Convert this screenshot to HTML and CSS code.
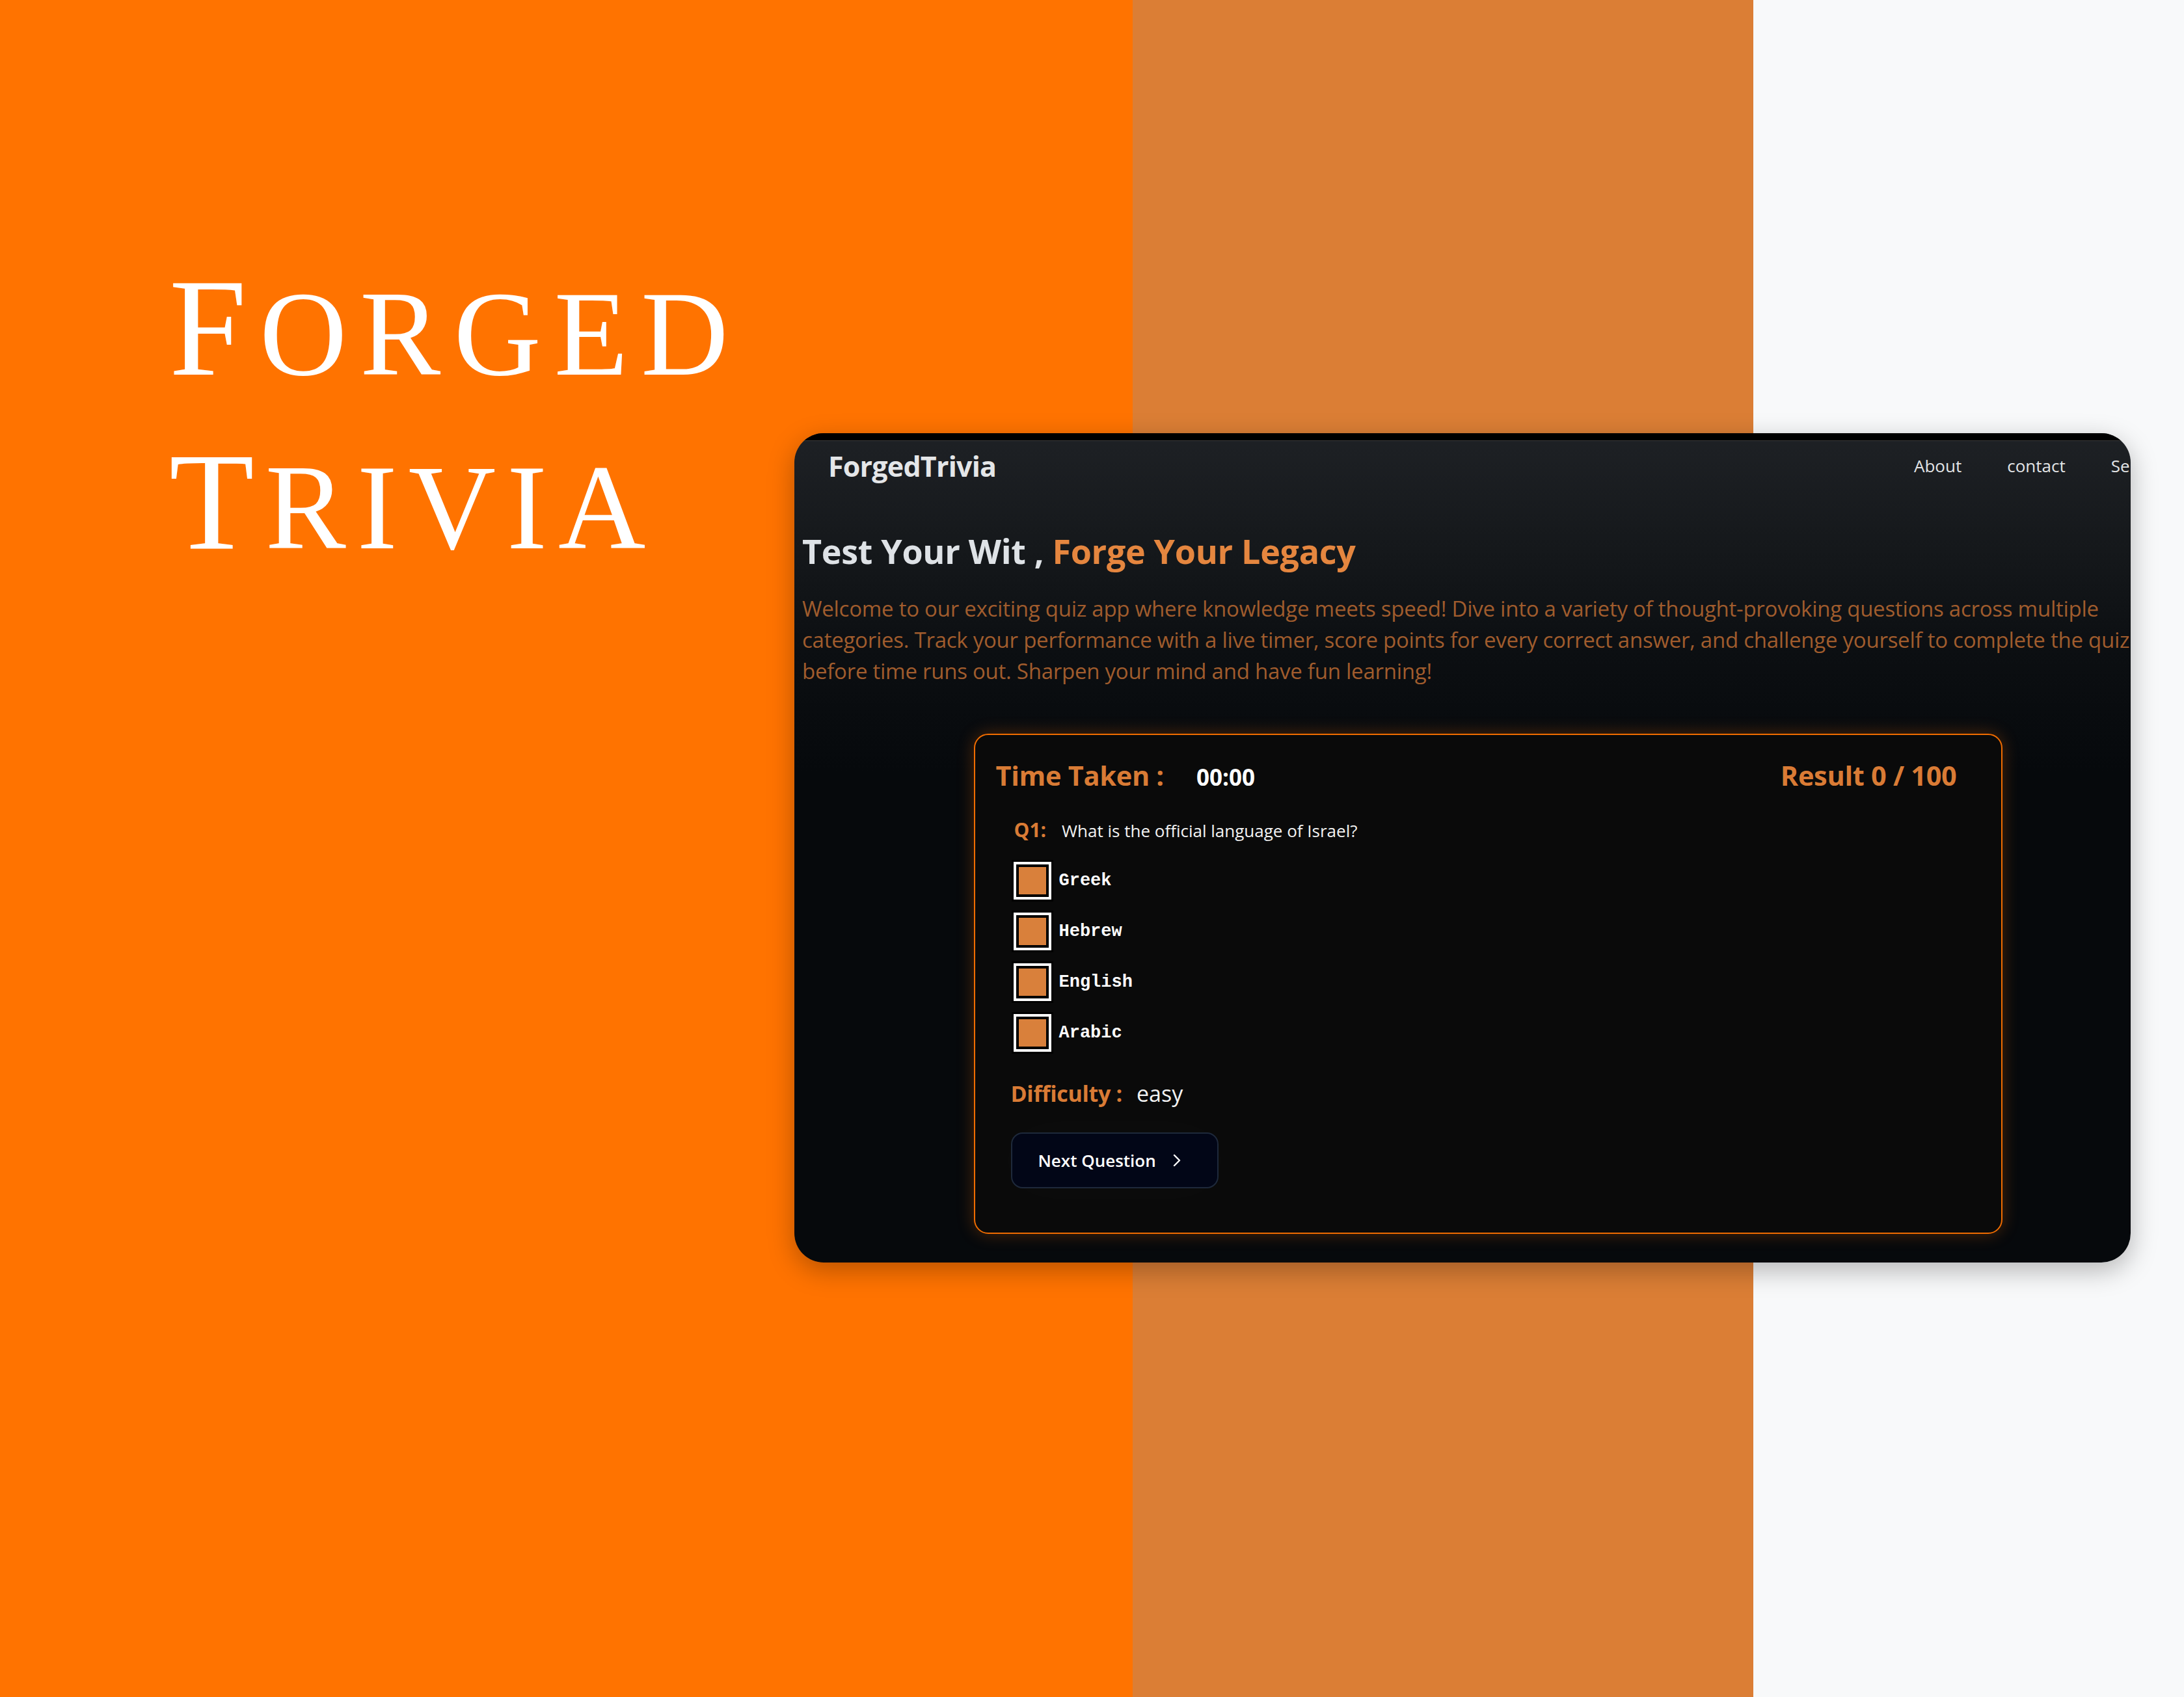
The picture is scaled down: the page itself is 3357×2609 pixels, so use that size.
FILE: index.html
```html
<!DOCTYPE html>
<html lang="en">
<head>
<meta charset="utf-8">
<title>Forged Trivia</title>
<link rel="stylesheet" href="styles.css">
</head>
<body>
<div class="stage">
  <div class="brand">
    <div class="brand-line">Forged</div>
    <div class="brand-line">Trivia</div>
  </div>

  <div class="device">
    <div class="device-bar"></div>
    <div class="page">
      <header class="nav">
        <div class="logo">ForgedTrivia</div>
        <nav class="links">
          <a href="#">About</a>
          <a href="#">contact</a>
          <a href="#">Services</a>
        </nav>
      </header>

      <main class="hero">
        <h1 class="hero-title">Test Your Wit , <span class="accent">Forge Your Legacy</span></h1>
        <p class="hero-text">Welcome to our exciting quiz app where knowledge meets speed! Dive into a variety of thought-provoking questions across multiple categories. Track your performance with a live timer, score points for every correct answer, and challenge yourself to complete the quiz before time runs out. Sharpen your mind and have fun learning!</p>

        <section class="quiz">
          <div class="quiz-head">
            <div class="timer"><span class="label-lg">Time Taken :</span><span class="time">00:00</span></div>
            <div class="label-lg">Result 0 / 100</div>
          </div>

          <div class="question"><span class="q-num">Q1:</span><span class="q-text">What is the official language of Israel?</span></div>

          <ul class="options">
            <li class="option"><span class="cb"><span class="cb-ring"><span class="cb-fill"></span></span></span><span class="opt-label">Greek</span></li>
            <li class="option"><span class="cb"><span class="cb-ring"><span class="cb-fill"></span></span></span><span class="opt-label">Hebrew</span></li>
            <li class="option"><span class="cb"><span class="cb-ring"><span class="cb-fill"></span></span></span><span class="opt-label">English</span></li>
            <li class="option"><span class="cb"><span class="cb-ring"><span class="cb-fill"></span></span></span><span class="opt-label">Arabic</span></li>
          </ul>

          <div class="difficulty"><span class="diff-label">Difficulty :</span><span class="diff-value">easy</span></div>

          <button class="next-btn" type="button">
            <span>Next Question</span>
            <svg class="chev" viewBox="0 0 12 20" width="12" height="20" aria-hidden="true"><path d="M2 2 L10 10 L2 18" fill="none" stroke="#ffffff" stroke-width="2.4" stroke-linecap="round" stroke-linejoin="round"/></svg>
          </button>
        </section>
      </main>
    </div>
  </div>
</div>
</body>
</html>
```

FILE: styles.css
```css
* { box-sizing: border-box; }

html, body {
  margin: 0;
  padding: 0;
}

body {
  width: 3357px;
  height: 2609px;
  overflow: hidden;
  background: linear-gradient(to right, #ff7300 0, #ff7300 1741px, #db7e35 1741px, #db7e35 2695px, #f8f9fa 2695px, #f8f9fa 100%);
  font-family: "Open Sans", "Noto Sans", sans-serif;
}

.stage {
  display: flex;
  align-items: flex-start;
}

/* Big brand title */
.brand {
  flex: none;
  width: 964px;
  margin-left: 260px;
  margin-top: 375px;
  color: #ffffff;
  font-family: "Liberation Serif", "Times New Roman", serif;
}

.brand-line {
  font-size: 186px;
  line-height: 257px;
  text-transform: uppercase;
  letter-spacing: 20px;
  white-space: nowrap;
}

.brand-line + .brand-line {
  letter-spacing: 17px;
}

.brand-line::first-letter {
  font-size: 214px;
}

/* Device / screenshot card */
.device {
  flex: none;
  width: 2054px;
  height: 1275px;
  margin-top: 666px;
  margin-left: -3px;
  border-radius: 45px;
  overflow: hidden;
  background: linear-gradient(180deg, #1e2125 0px, #15181b 180px, #0c0f12 330px, #06090c 520px, #06090c 100%);
  box-shadow: 0 12px 40px rgba(0, 0, 0, 0.28);
}

.device-bar {
  height: 12px;
  background: #000;
  border-bottom: 1px solid #3a3a3a;
}

.page {
  width: 2132px;
}

.nav {
  height: 76px;
  padding: 0 0 0 52px;
  display: flex;
  align-items: center;
  justify-content: space-between;
}

.logo {
  color: #e4e6e8;
  font-weight: 700;
  font-size: 43px;
  letter-spacing: -0.8px;
}

.links {
  display: flex;
  gap: 70px;
  width: 411px;
}

.links a {
  color: #e2e4e6;
  text-decoration: none;
  font-size: 26px;
}

.hero {
  padding: 0 12px;
}

.hero-title {
  margin: 63px 0 0;
  font-size: 52px;
  line-height: 60px;
  font-weight: 700;
  color: #dee2e6;
  letter-spacing: -0.3px;
}

.accent {
  color: #e5863f;
}

.hero-text {
  margin: 35px 0 0;
  font-size: 33px;
  line-height: 48px;
  color: #a05c2d;
  letter-spacing: -0.25px;
}

/* Quiz box */
.quiz {
  width: 1581px;
  margin: 72px auto 0;
  padding: 34px 68px 68px 32px;
  background: #0a0a0a;
  border: 2px solid #f06c00;
  border-radius: 22px;
  box-shadow: 0 0 26px rgba(255, 112, 0, 0.28);
}

.quiz-head {
  display: flex;
  justify-content: space-between;
  align-items: baseline;
}

.timer {
  display: flex;
  align-items: baseline;
  gap: 50px;
}

.label-lg {
  color: #d97b35;
  font-weight: 700;
  font-size: 41.5px;
  letter-spacing: -0.3px;
}

.time {
  color: #ffffff;
  font-weight: 700;
  font-size: 35px;
}

.question {
  margin: 35px 0 0 28px;
  display: flex;
  align-items: baseline;
  gap: 24px;
}

.q-num {
  color: #d97b35;
  font-weight: 700;
  font-size: 30px;
}

.q-text {
  color: #f2f2f2;
  font-size: 26px;
}

.options {
  list-style: none;
  margin: 26px 0 0 24px;
  padding: 0;
  display: flex;
  flex-direction: column;
  gap: 14px;
}

.option {
  display: flex;
  align-items: center;
  gap: 9px;
}

.cb {
  width: 64px;
  height: 64px;
  padding: 3px;
  background: #000;
  display: block;
}

.cb-ring {
  display: block;
  width: 100%;
  height: 100%;
  border: 4px solid #ffffff;
  padding: 4px;
  background: #000;
}

.cb-fill {
  display: block;
  width: 100%;
  height: 100%;
  background: #d9803b;
}

.opt-label {
  color: #ffffff;
  font-family: "Liberation Mono", "Courier New", monospace;
  font-weight: 700;
  font-size: 27px;
}

.difficulty {
  margin: 38px 0 0 23px;
  display: flex;
  align-items: baseline;
  gap: 22px;
}

.diff-label {
  color: #d97b35;
  font-weight: 700;
  font-size: 34px;
  letter-spacing: -0.3px;
}

.diff-value {
  color: #f2f2f2;
  font-size: 34px;
}

.next-btn {
  margin: 37px 0 0 23px;
  width: 319px;
  height: 86px;
  padding: 0 0 0 40px;
  display: flex;
  align-items: center;
  gap: 26px;
  background: #020617;
  border: 2px solid #1e293b;
  border-radius: 18px;
  color: #ffffff;
  font-family: "Open Sans", "Noto Sans", sans-serif;
  font-weight: 600;
  font-size: 26px;
  box-shadow: 0 0 80px rgba(255, 255, 255, 0.025);
}

.chev {
  display: block;
}
```
